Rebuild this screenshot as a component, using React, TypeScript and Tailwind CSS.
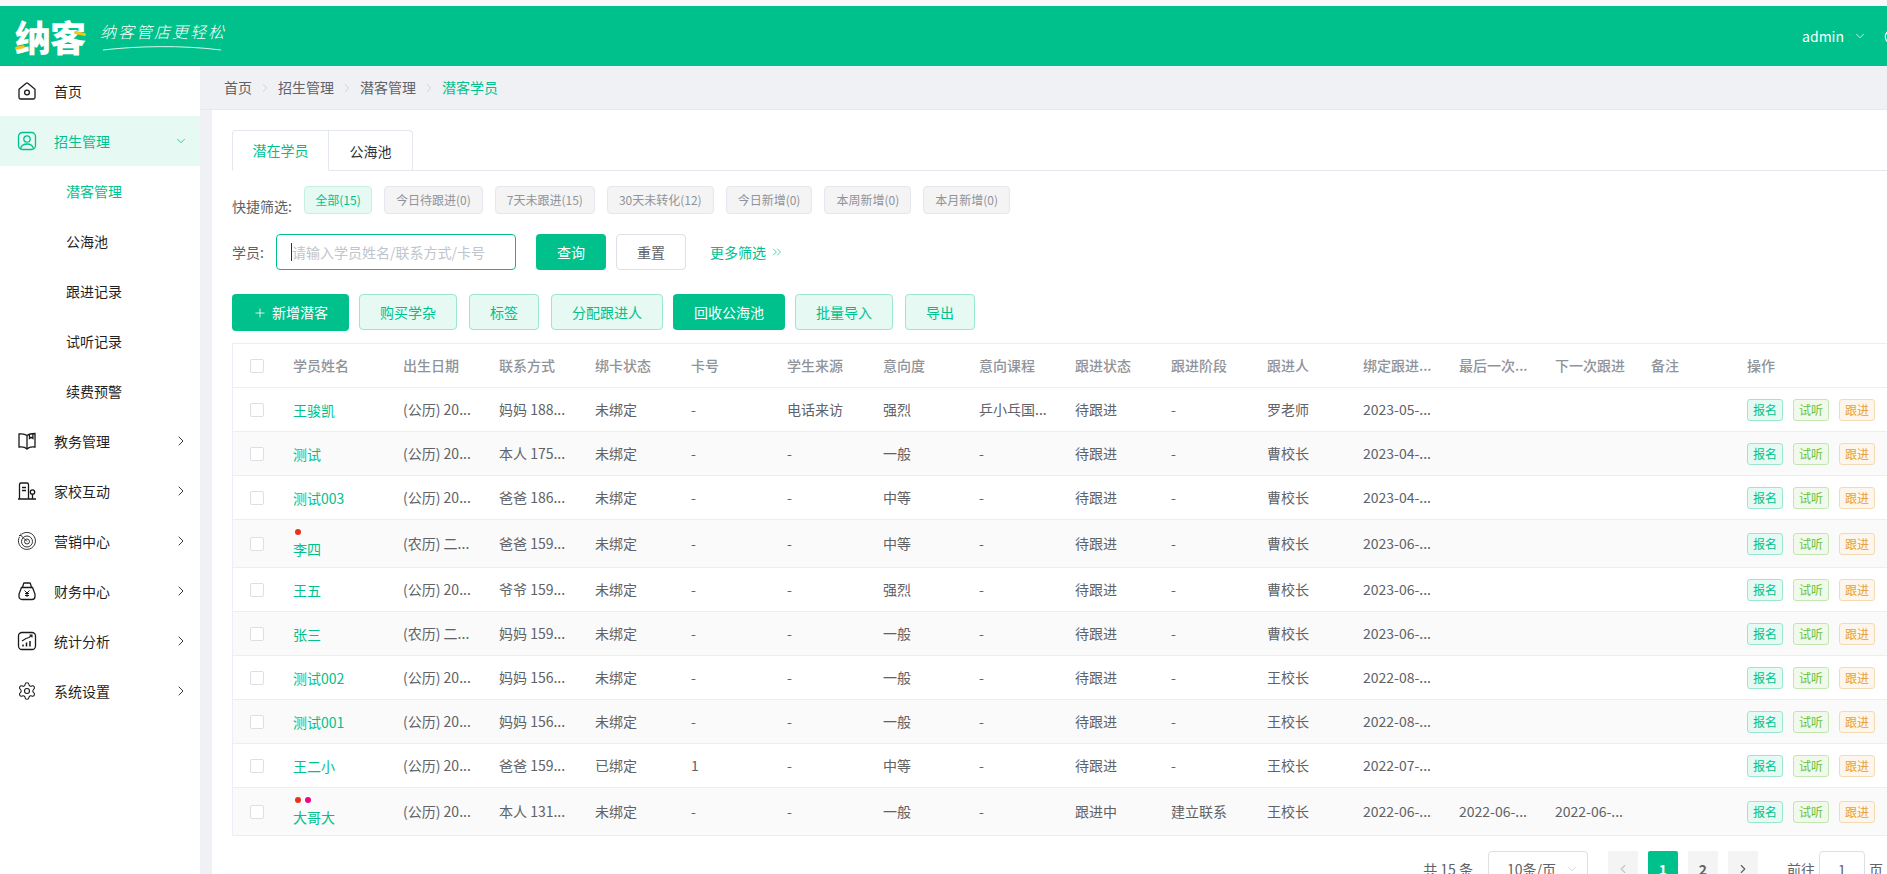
import { ChevronDown, ChevronLeft, ChevronRight, ChevronsRight, Plus, Power, Settings } from 'lucide-react';

const HomeIcon = () => (
  <svg viewBox="0 0 20 20" className="w-[20px] h-[20px]" fill="none" stroke="#1a1a1a" strokeWidth="1.3">
    <path d="M2 8.2 9.2 2.2a1.2 1.2 0 0 1 1.6 0L18 8.2v8.3a1.5 1.5 0 0 1-1.5 1.5h-13A1.5 1.5 0 0 1 2 16.5z" />
    <circle cx="10" cy="11.5" r="2.4" />
  </svg>
);

const UserIcon = () => (
  <svg viewBox="0 0 20 20" className="w-[20px] h-[20px]" fill="none" stroke="#00c18b" strokeWidth="1.3">
    <rect x="1.5" y="1.5" width="17" height="17" rx="4" />
    <circle cx="10" cy="8" r="3.2" />
    <path d="M3.5 18c.6-3.4 3.2-5 6.5-5s5.900 1.600 6.500 5" />
  </svg>
);

const BookIcon = () => (
  <svg viewBox="0 0 20 20" className="w-[20px] h-[20px]" fill="none" stroke="#1a1a1a" strokeWidth="1.3">
    <path d="M10 4.500C8 3 5 2.500 2 3v13c3-.5 6 0 8 2 2-2 5-2.500 8-2V2.500c-3 0-6 .5-8 2zM10 4.500V18" />
    <path d="M12.500 3.500v4l1.700-1.200 1.700 1.200V2.800" />
  </svg>
);

const BuildingIcon = () => (
  <svg viewBox="0 0 20 20" className="w-[20px] h-[20px]" fill="none" stroke="#1a1a1a" strokeWidth="1.3">
    <path d="M2.500 18V3.500A1.500 1.500 0 0 1 4 2h6a1.500 1.500 0 0 1 1.500 1.500V18M1 18h18M5 6.500h4M5 9.500h4" />
    <circle cx="15.500" cy="11" r="2.200" />
    <path d="M15.500 13v5" />
  </svg>
);

const TargetIcon = () => (
  <svg viewBox="0 0 20 20" className="w-[20px] h-[20px]" fill="none" stroke="#333" strokeWidth="1">
    <path d="M5 3a8.500 8.500 0 1 1-2.500 2.800" />
    <circle cx="10" cy="10.500" r="5.500" />
    <circle cx="10" cy="10.500" r="2.500" />
    <path d="M10 10.500 3.500 4M2 4.500h2v-2" />
  </svg>
);

const BagIcon = () => (
  <svg viewBox="0 0 20 20" className="w-[20px] h-[20px]" fill="none" stroke="#1a1a1a" strokeWidth="1.3">
    <path d="M5.500 6.500 6.500 2.800A1 1 0 0 1 7.500 2h5a1 1 0 0 1 1 .8l1 3.700M4.500 6.500h11L18 13v2.500a3 3 0 0 1-3 3H5a3 3 0 0 1-3-3V13z" />
    <path d="M7.500 9.500 10 12l2.500-2.500M10 12v4M8 12.500h4M8 14.500h4" strokeWidth="1" />
  </svg>
);

const ChartIcon = () => (
  <svg viewBox="0 0 20 20" className="w-[20px] h-[20px]" fill="none" stroke="#1a1a1a" strokeWidth="1.3">
    <rect x="1.500" y="1.500" width="17" height="17" rx="3.500" />
    <path d="M5 10l4-2.500 3-1 2.500-2M12.500 4h2.500v2.500" strokeWidth="1.100" />
    <path d="M6 15.500v-2M9.500 15.500v-4M13 15.500V10" strokeWidth="1.500" />
  </svg>
);

const GearIcon = () => <Settings size={20} strokeWidth={1.3} color="#1a1a1a" />;

const menuTop = [
  { label: '教务管理', icon: <BookIcon /> },
  { label: '家校互动', icon: <BuildingIcon /> },
  { label: '营销中心', icon: <TargetIcon /> },
  { label: '财务中心', icon: <BagIcon /> },
  { label: '统计分析', icon: <ChartIcon /> },
  { label: '系统设置', icon: <GearIcon /> },
];

const subMenu = ['潜客管理', '公海池', '跟进记录', '试听记录', '续费预警'];

const chips = ['今日待跟进(0)', '7天未跟进(15)', '30天未转化(12)', '今日新增(0)', '本周新增(0)', '本月新增(0)'];

const headers = ['学员姓名', '出生日期', '联系方式', '绑卡状态', '卡号', '学生来源', '意向度', '意向课程', '跟进状态', '跟进阶段', '跟进人', '绑定跟进...', '最后一次...', '下一次跟进', '备注'];

type Row = { name: string; dots?: string[]; cells: string[] };

const rows: Row[] = [
  { name: '王骏凯', cells: ['(公历) 20...', '妈妈 188...', '未绑定', '-', '电话来访', '强烈', '乒小乓国...', '待跟进', '-', '罗老师', '2023-05-...', '', '', ''] },
  { name: '测试', cells: ['(公历) 20...', '本人 175...', '未绑定', '-', '-', '一般', '-', '待跟进', '-', '曹校长', '2023-04-...', '', '', ''] },
  { name: '测试003', cells: ['(公历) 20...', '爸爸 186...', '未绑定', '-', '-', '中等', '-', '待跟进', '-', '曹校长', '2023-04-...', '', '', ''] },
  { name: '李四', dots: ['bg-[#e8321a]'], cells: ['(农历) 二...', '爸爸 159...', '未绑定', '-', '-', '中等', '-', '待跟进', '-', '曹校长', '2023-06-...', '', '', ''] },
  { name: '王五', cells: ['(公历) 20...', '爷爷 159...', '未绑定', '-', '-', '强烈', '-', '待跟进', '-', '曹校长', '2023-06-...', '', '', ''] },
  { name: '张三', cells: ['(农历) 二...', '妈妈 159...', '未绑定', '-', '-', '一般', '-', '待跟进', '-', '曹校长', '2023-06-...', '', '', ''] },
  { name: '测试002', cells: ['(公历) 20...', '妈妈 156...', '未绑定', '-', '-', '一般', '-', '待跟进', '-', '王校长', '2022-08-...', '', '', ''] },
  { name: '测试001', cells: ['(公历) 20...', '妈妈 156...', '未绑定', '-', '-', '一般', '-', '待跟进', '-', '王校长', '2022-08-...', '', '', ''] },
  { name: '王二小', cells: ['(公历) 20...', '爸爸 159...', '已绑定', '1', '-', '中等', '-', '待跟进', '-', '王校长', '2022-07-...', '', '', ''] },
  { name: '大哥大', dots: ['bg-[#e8321a]', 'bg-[#f0048c]'], cells: ['(公历) 20...', '本人 131...', '未绑定', '-', '-', '一般', '-', '跟进中', '建立联系', '王校长', '2022-06-...', '2022-06-...', '2022-06-...', ''] },
];

const Checkbox = () => <span className="block mx-auto w-[14px] h-[14px] bg-white border border-[#dcdfe6] rounded-[2px]"></span>;

const lightBtn = 'h-[36px] px-[20px] rounded-[4px] border border-[#99e6d1] bg-[#e6f9f3] text-[#00c18b] text-[14px]';
const solidBtn = 'h-[36px] px-[20px] rounded-[4px] bg-[#00c18b] text-white text-[14px]';

export default function App() {
  return (
    <div className="w-[1887px] h-[874px] overflow-hidden flex flex-col bg-[#f0f1f5] font-['Noto_Sans_CJK_SC','Noto_Sans',sans-serif] text-[14px]">
      <div className="h-[6px] shrink-0 bg-[#f8f8fb]"></div>

      {/* Header */}
      <header className="h-[60px] shrink-0 bg-[#00c18b] flex items-center text-white">
        <div className="relative ml-[15px] w-[72px] h-[40px] flex items-center">
          <span className="text-[36px] leading-[40px] font-black tracking-[-1px] whitespace-nowrap">纳客</span>
          <span className="absolute left-0 top-[30px] w-[10px] h-[3px] bg-[#f5c518] rounded-full -rotate-12"></span>
          <span className="absolute left-[59px] top-[16px] w-[12px] h-[3px] bg-[#f5c518] rounded-full rotate-12"></span>
        </div>
        <div className="relative ml-[13px] w-[126px] h-[40px]">
          <span className="block text-[16px] leading-[30px] tracking-[2px] font-light italic whitespace-nowrap">纳客管店更轻松</span>
          <svg viewBox="0 0 120 6" className="absolute left-[2px] top-[29px] w-[120px] h-[6px]" fill="none" stroke="#d9f7ee" strokeWidth="1">
            <path d="M1 5C35 1 80 0 119 5" />
          </svg>
        </div>
        <div className="flex-1"></div>
        <span className="text-[14px]">admin</span>
        <ChevronDown size={14} strokeWidth={1.3} className="ml-[9px]" />
        <Power size={18} strokeWidth={1.6} className="ml-[16px] mr-[-14px] shrink-0" />
      </header>

      <div className="flex flex-1 min-h-0">
        {/* Sidebar */}
        <aside className="w-[200px] shrink-0 bg-white text-[#1f1f1f]">
          <div className="h-[50px] flex items-center pl-[17px]">
            <HomeIcon />
            <span className="ml-[17px]">首页</span>
          </div>
          <div className="h-[50px] flex items-center pl-[17px] bg-[#e6f9f3] text-[#00c18b]">
            <UserIcon />
            <span className="ml-[17px]">招生管理</span>
            <ChevronDown size={14} strokeWidth={1.3} className="ml-auto mr-[12px]" />
          </div>
          {subMenu.map((item, i) => (
            <div key={item} className={`h-[50px] flex items-center pl-[66px] ${i === 0 ? 'text-[#00c18b]' : ''}`}>
              {item}
            </div>
          ))}
          {menuTop.map(item => (
            <div key={item.label} className="h-[50px] flex items-center pl-[17px]">
              {item.icon}
              <span className="ml-[17px]">{item.label}</span>
              <ChevronRight size={16} strokeWidth={1.3} className="ml-auto mr-[11px]" />
            </div>
          ))}
        </aside>

        {/* Main */}
        <main className="flex-1 min-w-0 flex flex-col">
          <nav className="h-[44px] shrink-0 flex items-center pl-[24px] text-[#606266] border-b border-[#e8e9ed]">
            <span>首页</span>
            <ChevronRight size={14} strokeWidth={1.2} className="mx-[6px] text-[#c0c4cc]" />
            <span>招生管理</span>
            <ChevronRight size={14} strokeWidth={1.2} className="mx-[6px] text-[#c0c4cc]" />
            <span>潜客管理</span>
            <ChevronRight size={14} strokeWidth={1.2} className="mx-[6px] text-[#c0c4cc]" />
            <span className="text-[#00c18b]">潜客学员</span>
          </nav>

          <section className="flex-1 ml-[12px] bg-white pl-[20px] pt-[20px] min-h-0">
            {/* Tabs */}
            <div className="flex h-[41px] border-b border-[#e4e7ed]">
              <div className="w-[97px] h-[41px] flex items-center justify-center border border-[#e4e7ed] border-b-white rounded-tl-[4px] text-[#00c18b]">潜在学员</div>
              <div className="w-[84px] h-[41px] flex items-center justify-center border border-l-0 border-[#e4e7ed] border-b-0 rounded-tr-[4px] text-[#303133]">公海池</div>
            </div>

            {/* Quick filters */}
            <div className="flex mt-[15px] h-[28px]">
              <span className="w-[72px] mt-[10px] leading-[20px] text-[#606266]">快捷筛选:</span>
              <div className="flex gap-x-[12px]">
                <span className="h-[28px] w-[68px] flex items-center justify-center border border-[#c6f0e4] bg-[#e6f9f3] text-[#00c18b] rounded-[4px] text-[12px]">全部(15)</span>
                {chips.map(chip => (
                  <span key={chip} className="h-[28px] px-[11px] flex items-center border border-[#e4e7ed] bg-[#f4f4f5] text-[#909399] rounded-[4px] text-[12px] whitespace-nowrap">{chip}</span>
                ))}
              </div>
            </div>

            {/* Search */}
            <div className="flex items-center mt-[20px] h-[36px]">
              <span className="w-[44px] text-[#606266]">学员:</span>
              <div className="relative w-[240px] h-[36px]">
                <input
                  placeholder="请输入学员姓名/联系方式/卡号"
                  className="w-full h-full px-[15px] border border-[#00c18b] rounded-[4px] text-[14px] outline-none placeholder:text-[#c0c4cc]"
                />
                <span className="absolute left-[15px] top-[9px] w-px h-[18px] bg-[#333]"></span>
              </div>
              <button className={`${solidBtn} ml-[20px] w-[70px] px-0`}>查询</button>
              <button className="h-[36px] w-[70px] ml-[10px] rounded-[4px] border border-[#dcdfe6] bg-white text-[#606266]">重置</button>
              <span className="ml-[24px] text-[#00c18b]">更多筛选</span>
              <ChevronsRight size={14} strokeWidth={1.2} className="ml-[4px] text-[#00c18b]" />
            </div>

            {/* Actions */}
            <div className="flex items-start mt-[24px] h-[38px]">
              <button className="h-[37px] w-[117px] flex items-center justify-center rounded-[4px] bg-[#00c18b] text-white">
                <Plus size={14} strokeWidth={1.4} className="mr-[5px]" />
                新增潜客
              </button>
              <button className={`${lightBtn} ml-[10px]`}>购买学杂</button>
              <button className={`${lightBtn} ml-[12px]`}>标签</button>
              <button className={`${lightBtn} ml-[12px]`}>分配跟进人</button>
              <button className={`${solidBtn} ml-[10px] w-[112px] px-0`}>回收公海池</button>
              <button className={`${lightBtn} ml-[10px]`}>批量导入</button>
              <button className={`${lightBtn} ml-[12px]`}>导出</button>
            </div>

            {/* Table */}
            <table className="mt-[11px] w-[1700px] table-fixed border-separate border-spacing-0 border-l border-t border-[#ebeef5] text-[#606266]">
              <colgroup>
                <col className="w-[48px]" />
                <col className="w-[110px]" />
                {headers.slice(1).map(h => (
                  <col key={h} className="w-[96px]" />
                ))}
                <col />
              </colgroup>
              <thead>
                <tr>
                  <th className="h-[44px] border-b border-[#ebeef5]">
                    <Checkbox />
                  </th>
                  {headers.map(h => (
                    <th key={h} className="h-[44px] px-[12px] border-b border-[#ebeef5] text-left font-medium text-[#909399] whitespace-nowrap overflow-hidden">{h}</th>
                  ))}
                  <th className="h-[44px] px-[12px] border-b border-[#ebeef5] text-left font-medium text-[#909399]">操作</th>
                </tr>
              </thead>
              <tbody>
                {rows.map((row, i) => {
                  const height = row.dots ? 'h-[48px]' : 'h-[44px]';
                  const stripe = i % 2 === 1 ? 'bg-[#fafafa]' : 'bg-white';
                  return (
                    <tr key={row.name}>
                      <td className={`${height} ${stripe} border-b border-[#ebeef5]`}>
                        <Checkbox />
                      </td>
                      <td className={`${height} ${stripe} px-[12px] border-b border-[#ebeef5] text-[#00c18b] whitespace-nowrap`}>
                        {row.dots && (
                          <div className="flex gap-x-[4px] ml-[2px] mb-[4px]">
                            {row.dots.map(dot => (
                              <span key={dot} className={`w-[6px] h-[6px] rounded-full ${dot}`}></span>
                            ))}
                          </div>
                        )}
                        <div className="leading-[20px]">{row.name}</div>
                      </td>
                      {row.cells.map((cell, j) => (
                        <td key={j} className={`${height} ${stripe} px-[12px] border-b border-[#ebeef5] whitespace-nowrap overflow-hidden`}>{cell}</td>
                      ))}
                      <td className={`${height} ${stripe} px-[12px] border-b border-[#ebeef5]`}>
                        <div className="flex gap-x-[10px] text-[12px]">
                          <span className="w-[36px] h-[22px] flex items-center justify-center rounded-[3px] border border-[#99e6d1] bg-[#e6f9f3] text-[#00c18b]">报名</span>
                          <span className="w-[36px] h-[22px] flex items-center justify-center rounded-[3px] border border-[#c2e7b0] bg-[#f0f9eb] text-[#67c23a]">试听</span>
                          <span className="w-[36px] h-[22px] flex items-center justify-center rounded-[3px] border border-[#f5dab1] bg-[#fdf6ec] text-[#e6a23c]">跟进</span>
                        </div>
                      </td>
                    </tr>
                  );
                })}
              </tbody>
            </table>

            {/* Pagination */}
            <div className="flex items-start justify-end mt-[15px] pr-[4px] text-[#606266]">
              <span className="mt-[8px]">共 15 条</span>
              <div className="ml-[15px] w-[100px] h-[36px] flex items-center border border-[#dcdfe6] rounded-[4px] pl-[18px] pr-[8px]">
                <span className="whitespace-nowrap">10条/页</span>
                <ChevronDown size={14} strokeWidth={1.2} className="ml-auto text-[#c0c4cc]" />
              </div>
              <span className="ml-[20px] w-[30px] h-[36px] flex items-center justify-center bg-[#f4f4f5] rounded-[2px] text-[#c0c4cc]"><ChevronLeft size={14} strokeWidth={2} /></span>
              <span className="ml-[10px] w-[30px] h-[36px] flex items-center justify-center bg-[#00c18b] rounded-[2px] text-white font-bold">1</span>
              <span className="ml-[10px] w-[30px] h-[36px] flex items-center justify-center bg-[#f4f4f5] rounded-[2px] font-bold">2</span>
              <span className="ml-[10px] w-[30px] h-[36px] flex items-center justify-center bg-[#f4f4f5] rounded-[2px]"><ChevronRight size={14} strokeWidth={2} /></span>
              <span className="ml-[29px] mt-[8px]">前往</span>
              <span className="ml-[4px] w-[46px] h-[36px] flex items-center justify-center border border-[#dcdfe6] rounded-[4px]">1</span>
              <span className="ml-[4px] mt-[8px]">页</span>
            </div>
          </section>
        </main>
      </div>
    </div>
  );
}
